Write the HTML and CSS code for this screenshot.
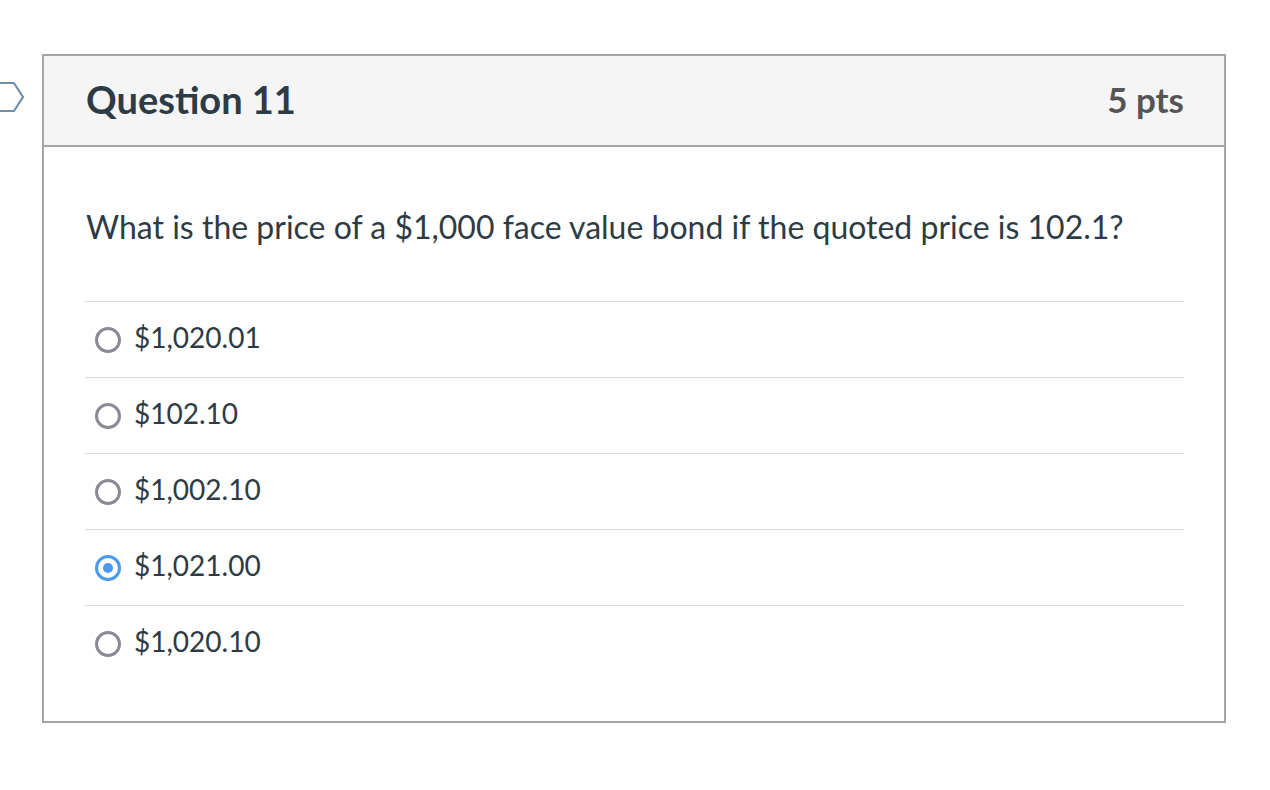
FILE: index.html
```html
<!DOCTYPE html>
<html>
<head>
<meta charset="utf-8">
<link rel="stylesheet" href="styles.css">
</head>
<body>
<div class="page">
  <svg class="flag" width="26" height="34" viewBox="0 0 26 34">
    <path d="M-10 2 H14 L23 16 L14 30 H-10" fill="none" stroke="#6f8ea8" stroke-width="2.2" stroke-linejoin="round"/>
  </svg>
  <div class="card">
    <div class="card-header">
      <h2 class="title">Question 11</h2>
      <span class="pts">5 pts</span>
    </div>
    <div class="card-body">
      <p class="question">What is the price of a $1,000 face value bond if the quoted price is 102.1?</p>
      <ul class="answers">
        <li class="answer"><span class="radio"></span><span class="label">$1,020.01</span></li>
        <li class="answer"><span class="radio"></span><span class="label">$102.10</span></li>
        <li class="answer"><span class="radio"></span><span class="label">$1,002.10</span></li>
        <li class="answer"><span class="radio checked"></span><span class="label">$1,021.00</span></li>
        <li class="answer"><span class="radio"></span><span class="label">$1,020.10</span></li>
      </ul>
    </div>
  </div>
</div>
</body>
</html>
```

FILE: styles.css
```css
html, body {
  margin: 0;
  padding: 0;
  background: #ffffff;
}
body {
  font-family: Lato, "Open Sans", "Liberation Sans", sans-serif;
  color: #2d3b45;
}
.page {
  position: relative;
  padding: 54px 0 0 42px;
}
.flag {
  position: absolute;
  left: 0;
  top: 81px;
}
.card {
  width: 1180px;
  border: 2px solid #a5a5a5;
  box-sizing: content-box;
}
.card-header {
  display: flex;
  justify-content: space-between;
  align-items: center;
  height: 89px;
  padding: 0 40px 0 42px;
  background: #f5f5f5;
  border-bottom: 2px solid #a5a5a5;
  box-sizing: content-box;
}
.title {
  margin: 0 0 4px 0;
  font-size: 38px;
  line-height: 46px;
  font-weight: 700;
  color: #2d3b45;
}
.pts {
  margin-bottom: 4px;
  font-size: 35px;
  line-height: 46px;
  font-weight: 700;
  color: #555555;
}
.card-body {
  padding: 0 40px 40px 41px;
}
.question {
  margin: 0;
  padding: 60px 0 54px 1px;
  font-size: 32px;
  line-height: 40px;
}
.answers {
  list-style: none;
  margin: 0;
  padding: 0;
}
.answer {
  display: flex;
  align-items: center;
  height: 75px;
  border-top: 1px solid #d9d9d9;
}
.radio {
  width: 20px;
  height: 20px;
  border: 3px solid #8c8a94;
  border-radius: 50%;
  margin-left: 10px;
  box-sizing: content-box;
  position: relative;
  flex: none;
}
.radio.checked {
  border-color: #4a98f0;
}
.radio.checked::after {
  content: "";
  position: absolute;
  left: 5px;
  top: 5px;
  width: 10px;
  height: 10px;
  border-radius: 50%;
  background: #4a98f0;
}
.label {
  margin-left: 13px;
  margin-bottom: 5px;
  font-size: 28px;
  color: #2d3b45;
}
```
